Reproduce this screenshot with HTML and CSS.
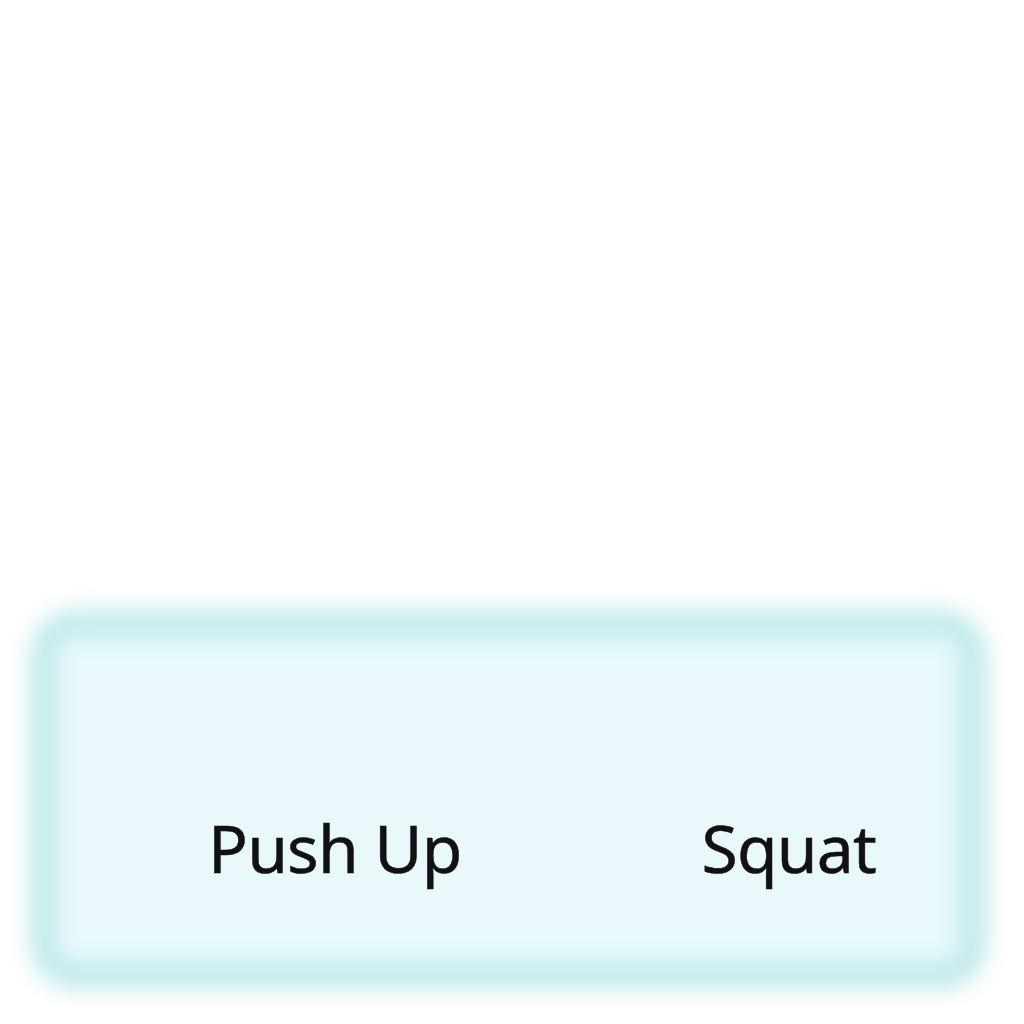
FILE: index.html
```html
<!DOCTYPE html>
<html lang="en">
<head>
<meta charset="utf-8">
<title>Exercises</title>
<link rel="stylesheet" href="styles.css">
</head>
<body>
  <div class="card">
    <div class="row">
      <span class="item">Push Up</span>
      <span class="item">Squat</span>
    </div>
  </div>
</body>
</html>
```

FILE: styles.css
```css
html, body {
  margin: 0;
  padding: 0;
  background: #ffffff;
}

body {
  width: 1024px;
  height: 1024px;
  overflow: hidden;
  font-family: "Noto Sans", "Open Sans", sans-serif;
}

.card {
  position: relative;
  margin-top: 610px;
  margin-left: 30px;
  width: 957px;
  height: 379px;
  box-sizing: border-box;
  padding: 204px 0 0 178px;
}

.card::before {
  content: "";
  position: absolute;
  inset: 0;
  box-sizing: border-box;
  border: 26px solid #c0e9eb;
  border-radius: 46px;
  background: #e8f8fb;
  filter: blur(11px);
  z-index: 0;
}

.row {
  position: relative;
  z-index: 1;
  display: flex;
  gap: 240px;
}

.item {
  font-size: 66px;
  line-height: 66px;
  letter-spacing: -0.8px;
  color: #111111;
  white-space: nowrap;
  -webkit-text-stroke: 0.5px #111111;
}
```
